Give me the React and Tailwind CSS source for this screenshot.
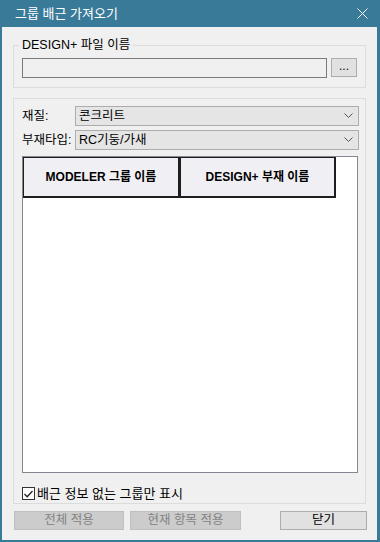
import React from 'react';

const font = { fontFamily: '"Liberation Sans", "Noto Sans CJK KR", sans-serif' };

const Chevron = () => (
    <svg width="9" height="6" viewBox="0 0 9 6" className="shrink-0">
        <path d="M0.5 0.5 L4.5 4.5 L8.5 0.5" fill="none" stroke="#555" strokeWidth="1" />
    </svg>
);

const Combo = ({ label, value }) => (
    <div className="flex items-center h-[20px]">
        <span className="w-[53px] shrink-0 text-[12.5px] leading-none text-black">{label}</span>
        <div className="flex-1 h-[20px] flex items-center justify-between border border-[#adadad] bg-[#e5e5e5] pl-[3px] pr-[5px]">
            <span className="text-[12.5px] leading-none text-black">{value}</span>
            <Chevron />
        </div>
    </div>
);

const App = () => {
    return (
        <div className="w-[380px] h-[542px] bg-[#3a7a99] flex flex-col select-none" style={font}>
            {/* title bar */}
            <div className="h-[27px] shrink-0 flex items-center justify-between pl-[15px] pr-[12px]">
                <span className="text-[13px] text-white leading-none">그룹 배근 가져오기</span>
                <svg width="11" height="11" viewBox="0 0 11 11">
                    <path d="M0.5 0.5 L10.5 10.5 M10.5 0.5 L0.5 10.5" stroke="#fff" strokeWidth="1" />
                </svg>
            </div>

            {/* body */}
            <div className="flex-1 ml-[2px] mr-[3px] mb-[2px] bg-[#f0f0f0] flex flex-col">
                <fieldset className="mt-[10px] ml-[11px] w-[353px] border border-[#dcdcdc] pl-[8px] pr-[8px] pt-[5px] pb-[9px]">
                    <legend className="ml-[-3px] px-[3px] text-[12.5px] leading-[16px] text-black">DESIGN+ 파일 이름</legend>
                    <div className="flex items-start gap-[4px]">
                        <div className="w-[305px] h-[20px] border border-[#7a7a7a] bg-[#f0f0f0]" />
                        <button className="w-[26px] h-[19px] border border-[#adadad] bg-[#e1e1e1] text-[12px] leading-none text-black pb-[3px]">...</button>
                    </div>
                </fieldset>

                <div className="mt-[10px] ml-[11px] w-[353px] h-[406px] border border-[#dcdcdc] pl-[8px] pr-[6px] pt-[7px] flex flex-col">
                    <Combo label="재질:" value="콘크리트" />
                    <div className="mt-[4px]">
                        <Combo label="부재타입:" value="RC기둥/가새" />
                    </div>

                    <div className="mt-[6px] w-[336px] h-[317px] border border-[#828790] bg-white flex flex-col">
                        <div className="flex">
                            <div className="w-[157px] h-[41px] border-t border-l border-r-2 border-b-2 border-[#1e1e1e] bg-[#f0f0f4] flex items-center justify-center text-[12px] font-bold text-black">
                                MODELER 그룹 이름
                            </div>
                            <div className="w-[156px] h-[41px] border-t border-l border-r-2 border-b-2 border-[#1e1e1e] bg-[#f0f0f4] flex items-center justify-center text-[12px] font-bold text-black">
                                DESIGN+ 부재 이름
                            </div>
                        </div>
                    </div>

                    <label className="mt-[14px] flex items-center gap-[2px]">
                        <span className="w-[13px] h-[13px] border border-[#333] bg-white flex items-center justify-center">
                            <svg width="9" height="8" viewBox="0 0 9 8">
                                <path d="M0.5 4 L3.2 6.7 L8.5 1" fill="none" stroke="#222" strokeWidth="1.3" />
                            </svg>
                        </span>
                        <span className="text-[13px] leading-none text-black">배근 정보 없는 그룹만 표시</span>
                    </label>
                </div>

                <div className="mt-[7px] ml-[12px] flex items-center">
                    <button className="w-[110px] h-[19px] border border-[#bfbfbf] bg-[#cccccc] text-[12.5px] leading-none text-[#838383]">전체 적용</button>
                    <button className="ml-[6px] w-[111px] h-[19px] border border-[#bfbfbf] bg-[#cccccc] text-[12.5px] leading-none text-[#838383]">현재 항목 적용</button>
                    <button className="ml-[39px] w-[87px] h-[19px] border border-[#adadad] bg-[#e1e1e1] text-[12.5px] leading-none text-black">닫기</button>
                </div>
            </div>
        </div>
    );
};

export default App;
